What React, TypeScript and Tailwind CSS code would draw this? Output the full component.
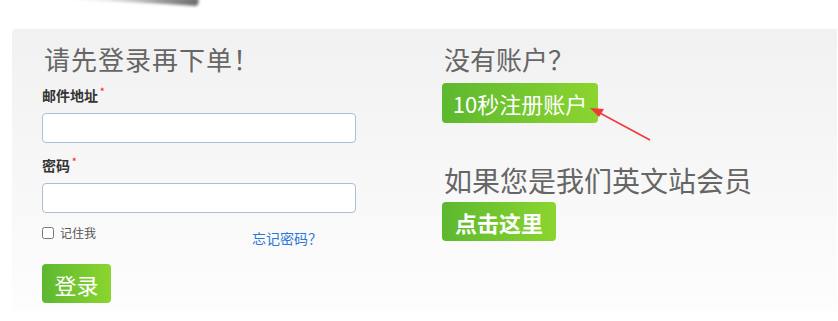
import React from "react";

const cjk = { fontFamily: '"Noto Sans CJK SC", "Liberation Sans", sans-serif' };

function GreenButton({ children, className = "" }: { children: React.ReactNode; className?: string }) {
  return (
    <button
      className={`bg-gradient-to-r from-[#5cb82f] to-[#8bd52f] text-white rounded-[4px] leading-none ${className}`}
    >
      {children}
    </button>
  );
}

function Field({ label }: { label: string }) {
  return (
    <div className="flex flex-col">
      <label className="text-[14px] font-bold text-[#333] leading-[20px] flex">
        {label}
        <span className="text-[#e33] text-[9px] leading-none ml-[2px] mt-[2px]">*</span>
      </label>
      <input className="mt-[8px] w-[314px] h-[30px] bg-white border border-[#aebfd4] rounded-[4px]" />
    </div>
  );
}

export default function App() {
  return (
    <div className="w-[838px] h-[321px] bg-white overflow-hidden" style={cjk}>
      <div className="h-[29px] relative">
        <svg width="220" height="14" className="absolute left-0 top-0">
          <defs>
            <linearGradient id="sh" x1="0" x2="1" y1="0" y2="0">
              <stop offset="0" stopColor="#ffffff" stopOpacity="0" />
              <stop offset="0.75" stopColor="#9a9a9a" />
              <stop offset="1" stopColor="#6a6a6a" />
            </linearGradient>
            <filter id="bl" x="-10%" y="-50%" width="120%" height="200%">
              <feGaussianBlur stdDeviation="1.6" />
            </filter>
          </defs>
          <path d="M40,-2 Q140,2 196,6 Q200,4 198,-2 Z" fill="url(#sh)" filter="url(#bl)" />
        </svg>
      </div>
      <div className="ml-[12px] w-[825px] h-[282px] bg-gradient-to-b from-[#f1f1f1] to-[#fdfdfd] rounded-tl-[4px] flex pl-[30px] relative">
        <div className="w-[400px] flex flex-col pt-[14px]">
          <h1 className="text-[26px] leading-[32px] text-[#666] pl-[2px] tracking-[1px]">请先登录再下单！</h1>
          <div className="mt-[10px]">
            <Field label="邮件地址" />
          </div>
          <div className="mt-[12px]">
            <Field label="密码" />
          </div>
          <div className="flex items-center mt-[11px] h-[18px]">
            <input type="checkbox" className="w-[12px] h-[12px] m-0" />
            <span className="ml-[6px] text-[12px] text-[#555]">记住我</span>
            <a className="ml-[156px] mt-[10px] text-[14px] text-[#2a78d8]">忘记密码？</a>
          </div>
          <GreenButton className="mt-[22px] w-[69px] h-[39px] text-[22px]">登录</GreenButton>
        </div>
        <div className="flex flex-col pt-[14px]">
          <h2 className="text-[26px] leading-[32px] text-[#666] pl-[2px]">没有账户？</h2>
          <GreenButton className="mt-[8px] w-[156px] h-[40px] text-[22px]">10秒注册账户</GreenButton>
          <h2 className="mt-[40px] text-[28px] leading-[34px] text-[#666] pl-[2px]">如果您是我们英文站会员</h2>
          <GreenButton className="mt-[5px] w-[114px] h-[39px] text-[22px] font-bold">点击这里</GreenButton>
        </div>
        <svg width="70" height="40" className="absolute left-[576px] top-[77px]">
          <line x1="62" y1="34" x2="10" y2="6" stroke="#f03a3a" strokeWidth="1.6" />
          <polygon points="2,2 16,3 11,11" fill="#f03a3a" />
        </svg>
      </div>
    </div>
  );
}
